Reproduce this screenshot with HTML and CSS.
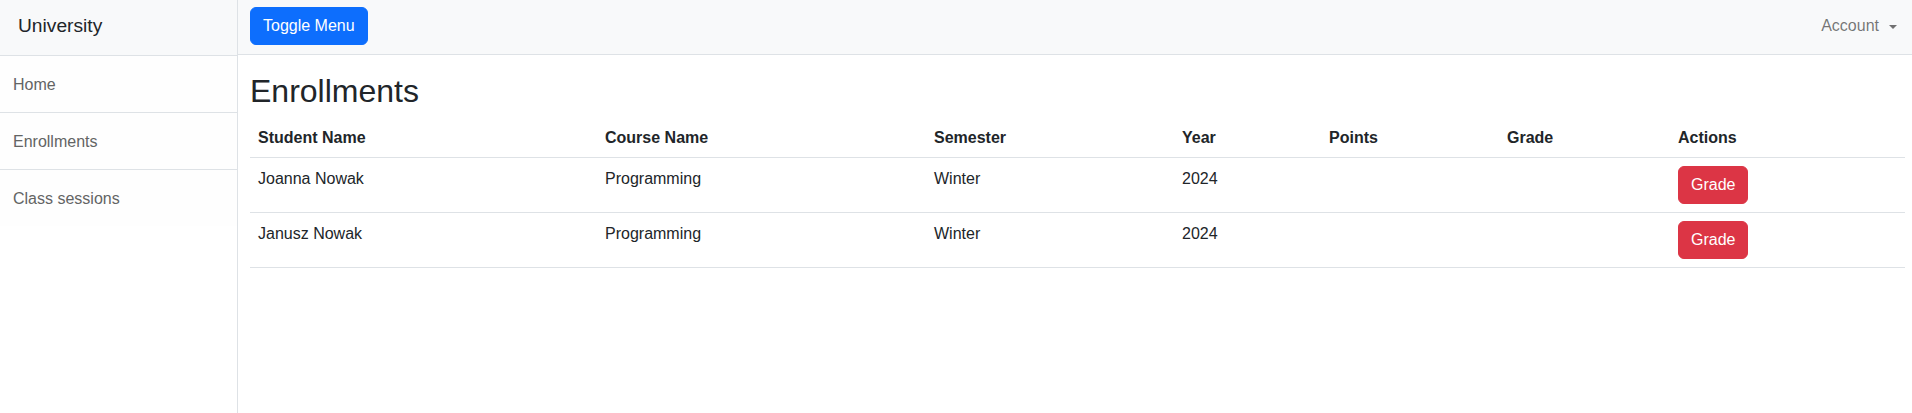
FILE: index.html
```html
<!DOCTYPE html>
<html lang="en">
<head>
<meta charset="utf-8">
<title>Enrollments</title>
<link rel="stylesheet" href="styles.css">
</head>
<body>
<div class="wrapper">
  <aside class="sidebar">
    <div class="sidebar-heading">University</div>
    <nav class="side-list">
      <a class="side-item" href="#">Home</a>
      <a class="side-item" href="#">Enrollments</a>
      <a class="side-item" href="#">Class sessions</a>
    </nav>
  </aside>
  <div class="page">
    <header class="topbar">
      <button class="btn btn-primary" type="button">Toggle Menu</button>
      <a class="account" href="#">Account<span class="caret"></span></a>
    </header>
    <main class="content">
      <h1 class="title">Enrollments</h1>
      <table class="table">
        <colgroup>
          <col class="c1"><col class="c2"><col class="c3"><col class="c4"><col class="c5"><col class="c6"><col class="c7">
        </colgroup>
        <thead>
          <tr><th>Student Name</th><th>Course Name</th><th>Semester</th><th>Year</th><th>Points</th><th>Grade</th><th>Actions</th></tr>
        </thead>
        <tbody>
          <tr><td>Joanna Nowak</td><td>Programming</td><td>Winter</td><td>2024</td><td></td><td></td><td class="act"><button class="btn btn-danger" type="button">Grade</button></td></tr>
          <tr><td>Janusz Nowak</td><td>Programming</td><td>Winter</td><td>2024</td><td></td><td></td><td class="act"><button class="btn btn-danger" type="button">Grade</button></td></tr>
        </tbody>
      </table>
    </main>
  </div>
</div>
</body>
</html>
```

FILE: styles.css
```css
* { box-sizing: border-box; }
html, body { margin: 0; padding: 0; }
body {
  font-family: "Liberation Sans", Arial, sans-serif;
  font-size: 16px;
  line-height: 1.5;
  color: #212529;
  background: #fff;
}
.wrapper { display: flex; min-height: 100vh; }
.sidebar {
  width: 238px;
  flex: 0 0 238px;
  border-right: 1px solid #dee2e6;
  background: #fff;
  min-height: 100vh;
}
.sidebar-heading {
  height: 56px;
  display: flex;
  align-items: center;
  padding: 0 18px 2px;
  font-size: 19.2px;
  background: #f8f9fa;
  border-bottom: 1px solid #dee2e6;
  color: #212529;
}
.side-list { display: flex; flex-direction: column; }
.side-item {
  display: block;
  padding: 17px 13px 15px;
  color: #636464;
  background: #fefefe;
  text-decoration: none;
  border-bottom: 1px solid #dee2e6;
  line-height: 24px;
}
.side-item:last-child { border-bottom: 0; }
.page { flex: 1; min-width: 0; }
.topbar {
  height: 55px;
  display: flex;
  align-items: center;
  justify-content: space-between;
  padding: 0 7px 2px 12px;
  background: #f8f9fa;
  border-bottom: 1px solid #dee2e6;
}
.btn {
  font-family: inherit;
  font-size: 16px;
  line-height: 24px;
  padding: 6px 12px;
  border: 1px solid transparent;
  border-radius: 6px;
  color: #fff;
  cursor: pointer;
}
.btn-primary { background: #0d6efd; border-color: #0d6efd; }
.btn-danger { background: #dc3545; border-color: #dc3545; }
.account {
  color: rgba(0, 0, 0, 0.55);
  text-decoration: none;
  padding: 8px;
  display: flex;
  align-items: center;
}
.caret {
  display: inline-block;
  margin-left: 10px;
  border-top: 4.8px solid currentColor;
  border-left: 4px solid transparent;
  border-right: 4px solid transparent;
  margin-top: 1px;
}
.content { padding: 0 7px 0 12px; }
.title {
  font-size: 32px;
  font-weight: 500;
  line-height: 1.2;
  margin: 17px 0 7px;
}
.table {
  width: 100%;
  border-collapse: collapse;
  table-layout: fixed;
}
.table th, .table td {
  text-align: left;
  vertical-align: top;
  padding: 9px 8px 7px;
  border-bottom: 1px solid #dee2e6;
}
.table td.act { padding: 8px; }
.table th { font-weight: 700; }
.c1 { width: 347px; }
.c2 { width: 329px; }
.c3 { width: 248px; }
.c4 { width: 147px; }
.c5 { width: 178px; }
.c6 { width: 171px; }
```
